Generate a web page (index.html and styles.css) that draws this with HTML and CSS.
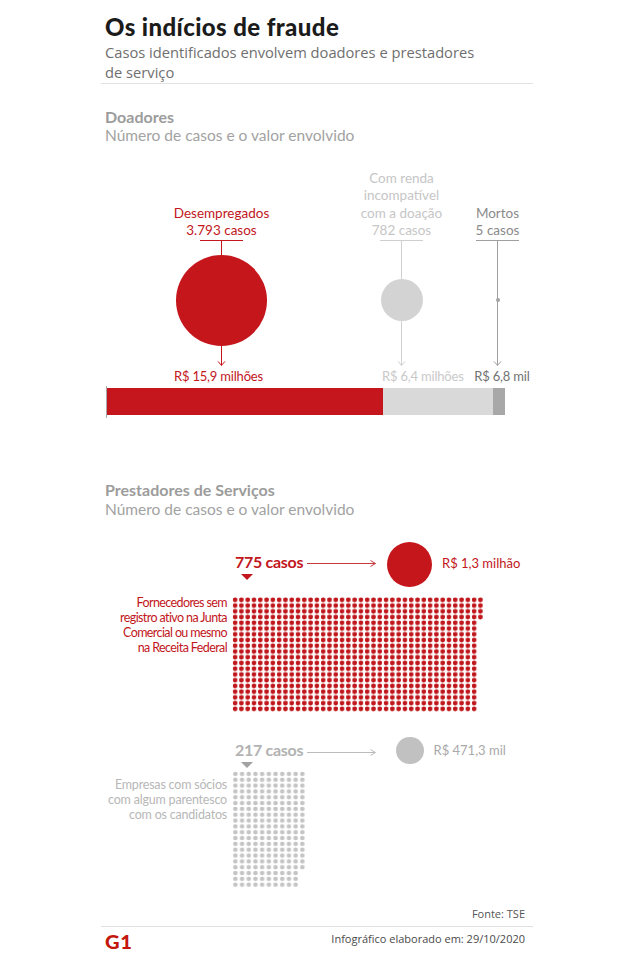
FILE: index.html
```html
<!DOCTYPE html>
<html lang="pt-BR">
<head>
<meta charset="utf-8">
<title>Os indícios de fraude</title>
<link rel="stylesheet" href="styles.css">
</head>
<body>
<main class="info">
  <header class="head">
    <h1 class="title">Os indícios de fraude</h1>
    <p class="subtitle">Casos identificados envolvem doadores e prestadores<br>de serviço</p>
  </header>

  <section class="section section--donors">
    <h2 class="sec-title">Doadores</h2>
    <p class="sec-sub">Número de casos e o valor envolvido</p>

    <div class="bubbles">
      <div class="node node--red">
        <p class="node-label">Desempregados<br>3.793 casos</p>
        <span class="tick"></span>
        <span class="stem"></span>
        <div class="orb-box"><span class="orb orb--big"></span></div>
        <svg class="arrow-down" width="11" height="20" viewBox="0 0 11 20"><path d="M5.5 0V19.4M2 15.4L5.5 19.4L9 15.4" fill="none" stroke="currentColor" stroke-width="1"/></svg>
        <p class="node-value">R$ 15,9 milhões</p>
      </div>
      <div class="node node--light">
        <p class="node-label">Com renda<br>incompatível<br>com a doação<br>782 casos</p>
        <span class="tick"></span>
        <span class="stem"></span>
        <div class="orb-box"><span class="orb orb--mid"></span></div>
        <svg class="arrow-down" width="11" height="20" viewBox="0 0 11 20"><path d="M5.5 0V19.4M2 15.4L5.5 19.4L9 15.4" fill="none" stroke="currentColor" stroke-width="1"/></svg>
        <p class="node-value">R$ 6,4 milhões</p>
      </div>
      <div class="node node--dark">
        <p class="node-label">Mortos<br>5 casos</p>
        <span class="tick"></span>
        <span class="stem"></span>
        <div class="orb-box"><span class="orb orb--dot"></span></div>
        <svg class="arrow-down" width="11" height="20" viewBox="0 0 11 20"><path d="M5.5 0V19.4M2 15.4L5.5 19.4L9 15.4" fill="none" stroke="currentColor" stroke-width="1"/></svg>
        <p class="node-value">R$ 6,8 mil</p>
      </div>
    </div>

    <div class="bar-wrap">
      <div class="bar">
        <span class="seg seg--red" style="width:275.5px"></span>
        <span class="seg seg--light" style="width:110.5px"></span>
        <span class="seg seg--dark" style="width:12px"></span>
      </div>
    </div>
  </section>

  <section class="section section--vendors">
    <h2 class="sec-title">Prestadores de Serviços</h2>
    <p class="sec-sub">Número de casos e o valor envolvido</p>

    <div class="case-row case-row--red">
      <div class="case-count">
        <span class="case-num">775 casos</span>
        <span class="tri"></span>
      </div>
      <svg class="arrow-right" width="69" height="9" viewBox="0 0 69 9"><path d="M0 4.5H68.4M63.5 1.5L68.4 4.5L63.5 7.5" fill="none" stroke="currentColor" stroke-width="1"/></svg>
      <span class="case-orb"></span>
      <span class="case-value">R$ 1,3 milhão</span>
    </div>

    <div class="dot-block dot-block--red">
      <p class="dot-label">Fornecedores sem<br>registro ativo na Junta<br>Comercial ou mesmo<br>na Receita Federal</p>
      <svg class="dots" width="252" height="115" viewBox="0 0 252 115">
        <defs>
          <pattern id="dot-red" width="6.29" height="5.74" patternUnits="userSpaceOnUse">
            <circle cx="3.145" cy="2.87" r="2.3" fill="#c0171c"/>
          </pattern>
        </defs>
        <rect width="245.31" height="114.8" fill="url(#dot-red)"/>
        <rect x="245.31" width="6.29" height="22.96" fill="url(#dot-red)"/>
      </svg>
    </div>

    <div class="case-row case-row--gray">
      <div class="case-count">
        <span class="case-num">217 casos</span>
        <span class="tri"></span>
      </div>
      <svg class="arrow-right" width="69" height="9" viewBox="0 0 69 9"><path d="M0 4.5H68.4M63.5 1.5L68.4 4.5L63.5 7.5" fill="none" stroke="currentColor" stroke-width="1"/></svg>
      <span class="case-orb"></span>
      <span class="case-value">R$ 471,3 mil</span>
    </div>

    <div class="dot-block dot-block--gray">
      <p class="dot-label">Empresas com sócios<br>com algum parentesco<br>com os candidatos</p>
      <svg class="dots" width="74" height="117" viewBox="0 0 74 117">
        <defs>
          <pattern id="dot-gray" width="6.7" height="5.83" patternUnits="userSpaceOnUse">
            <circle cx="3.35" cy="2.915" r="2.3" fill="#c4c4c4"/>
          </pattern>
        </defs>
        <rect width="73.7" height="99.11" fill="url(#dot-gray)"/>
        <rect y="99.11" width="67" height="17.49" fill="url(#dot-gray)"/>
      </svg>
    </div>
  </section>

  <footer class="foot">
    <p class="source">Fonte: TSE</p>
    <div class="credit">
      <span class="logo">G1</span>
      <p class="made">Infográfico elaborado em: 29/10/2020</p>
    </div>
  </footer>
</main>
</body>
</html>
```

FILE: styles.css
```css
* { box-sizing: border-box; }

html, body {
  margin: 0;
  background: #ffffff;
}

body {
  font-family: Lato, "Open Sans", sans-serif;
  color: #333333;
}

.info {
  width: 432px;
  margin-left: 101px;
  padding-top: 12px;
}

/* Header */
.head {
  padding-bottom: 1px;
  border-bottom: 1px solid #e2e2e2;
}

.title {
  margin: 0;
  padding-left: 4px;
  font: 900 24px/29px Lato, sans-serif;
  letter-spacing: 0.4px;
  color: #1b1b1b;
}

.subtitle {
  margin: 1px 0 0;
  padding-left: 4px;
  font: 400 14.7px/20px "Open Sans", sans-serif;
  color: #6f6f6f;
}

/* Sections */
.section--donors { margin-top: 22.5px; }
.section--vendors { margin-top: 62.5px; }

.sec-title {
  margin: 0;
  padding-left: 4px;
  font: 700 16px/19.2px Lato, sans-serif;
  color: #9c9c9c;
}

.sec-sub {
  margin: 0;
  padding-left: 4px;
  font: 400 15.5px/18.6px Lato, sans-serif;
  color: #a2a2a2;
}

/* Donors bubble chart */
.bubbles {
  display: grid;
  grid-template-columns: 50px 141px 59px 101px 10px 71px;
  align-items: end;
  margin-top: 25.5px;
}

.node {
  display: flex;
  flex-direction: column;
  align-items: center;
  color: var(--line);
}

.node--red   { grid-column: 2; --line: #c4161c; --orb: #c5161c; --text: #c2161c; --value: #c2161c; }
.node--light { grid-column: 4; --line: #cfcfcf; --orb: #d3d3d3; --text: #c6c6c6; --value: #c9c9c9; }
.node--dark  { grid-column: 6; --line: #9f9f9f; --orb: #a3a3a3; --text: #8a8a8a; --value: #727272; }

.node-label {
  margin: 0;
  font-size: 13.5px;
  line-height: 17.5px;
  text-align: center;
  white-space: nowrap;
  color: var(--text);
}

.tick {
  width: 43px;
  height: 1px;
  background: var(--line);
}

.stem {
  width: 1px;
  height: 14px;
  background: var(--line);
}

.orb-box {
  width: 91px;
  height: 91px;
  flex: none;
  display: flex;
  align-items: center;
  justify-content: center;
  background: linear-gradient(var(--line), var(--line)) center / 1px 100% no-repeat;
}

.orb {
  border-radius: 50%;
  background: var(--orb);
}

.orb--big { width: 91px; height: 91px; }
.orb--mid { width: 42px; height: 42px; }
.orb--dot { width: 4px; height: 4px; }

.arrow-down { display: block; flex: none; }

.node-value {
  align-self: stretch;
  margin: 0;
  font-size: 13px;
  line-height: 20px;
  letter-spacing: -0.2px;
  white-space: nowrap;
  text-align: center;
  color: var(--value);
}

.node--red .node-value { padding-right: 6px; }
.node--light .node-value { text-align: left; padding-left: 31px; }
.node--dark .node-value { padding-left: 9px; }

.bar-wrap {
  margin-left: 5px;
  padding: 2px 0 3px;
  border-left: 1px solid #a9a9a9;
}

.bar {
  display: flex;
  height: 27px;
}

.seg { display: block; height: 100%; }
.seg--red { background: #c4161c; }
.seg--light { background: #d9d9d9; }
.seg--dark { background: #a8a8a8; }

/* Vendors */
.case-row {
  display: flex;
  align-items: flex-start;
  padding-left: 134px;
}

.case-count {
  width: 67px;
  flex: none;
  display: flex;
  flex-direction: column;
}

.case-num {
  font: 700 16px/20px Lato, sans-serif;
  letter-spacing: -0.3px;
  white-space: nowrap;
}

.tri {
  width: 0;
  height: 0;
  margin: 2px 0 0 6px;
  border-left: 6px solid transparent;
  border-right: 6px solid transparent;
  border-top: 6px solid currentColor;
}

.arrow-right {
  display: block;
  flex: none;
  margin-left: 5px;
}

.case-orb {
  flex: none;
  border-radius: 50%;
}

.case-value {
  font-size: 13px;
  line-height: 20px;
  white-space: nowrap;
}

.case-row--red {
  margin-top: 24px;
  color: #c2161c;
}
.case-row--red .case-count { margin-top: 9.5px; }
.case-row--red .arrow-right { margin-top: 17px; color: #c9383d; }
.case-row--red .case-orb { width: 45px; height: 45px; margin-left: 11px; background: #c5161c; }
.case-row--red .case-value { margin: 10.5px 0 0 10px; }

.case-row--gray {
  margin-top: 25px;
  color: #b2b2b2;
}
.case-row--gray .case-count { margin-top: 3.5px; }
.case-row--gray .tri { border-top-color: #a2a2a2; }
.case-row--gray .arrow-right { margin-top: 11.5px; color: #bcbcbc; }
.case-row--gray .case-orb { width: 27.5px; height: 27.5px; margin-left: 20px; background: #c1c1c1; }
.case-row--gray .case-value { margin: 3.5px 0 0 10px; color: #a9a9a9; }

.dot-block {
  display: flex;
  align-items: flex-start;
  gap: 5px;
}

.dot-label {
  width: 126px;
  flex: none;
  margin: 0;
  text-align: right;
  white-space: nowrap;
}

.dots { display: block; flex: none; }

.dot-block--red { margin-top: 9.5px; }
.dot-block--red .dot-label {
  margin-top: -2px;
  font-size: 12.5px;
  line-height: 15px;
  letter-spacing: -0.6px;
  color: #c2161c;
}

.dot-block--gray { margin-top: 3px; }
.dot-block--gray .dot-label {
  margin-top: 6px;
  font-size: 12.5px;
  line-height: 15px;
  letter-spacing: -0.2px;
  color: #b7b7b7;
}

/* Footer */
.foot { margin-top: 18px; }

.source {
  margin: 0;
  padding-right: 8px;
  font: 400 11px/15px "Open Sans", sans-serif;
  text-align: right;
  color: #555555;
}

.credit {
  display: flex;
  justify-content: space-between;
  align-items: flex-start;
  margin-top: 5px;
  padding: 4px 8px 0 4px;
  border-top: 1px solid #e0e0e0;
}

.logo {
  display: inline-block;
  margin-top: 2px;
  font: 900 18px/18px Lato, sans-serif;
  letter-spacing: 0.5px;
  color: #c4170c;
  transform: scaleX(1.12);
  transform-origin: left center;
}

.made {
  margin: 0;
  font: 400 11px/15px "Open Sans", sans-serif;
  color: #4a4a4a;
}
```
